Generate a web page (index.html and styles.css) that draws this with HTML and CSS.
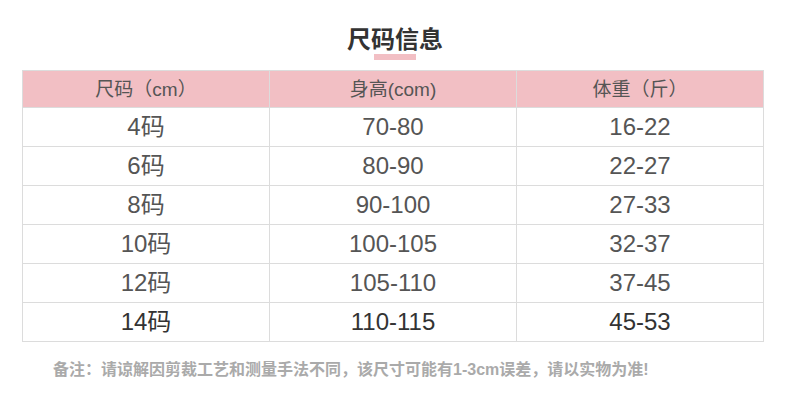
FILE: index.html
```html
<!DOCTYPE html>
<html lang="zh">
<head>
<meta charset="utf-8">
<link rel="stylesheet" href="styles.css">
</head>
<body>
<div class="page">
  <h1 class="title">尺码信息</h1>
  <div class="title-bar"></div>
  <table class="size-table">
    <thead>
      <tr><th>尺码（cm）</th><th>身高(com)</th><th>体重（斤）</th></tr>
    </thead>
    <tbody>
      <tr><td>4码</td><td>70-80</td><td>16-22</td></tr>
      <tr><td>6码</td><td>80-90</td><td>22-27</td></tr>
      <tr><td>8码</td><td>90-100</td><td>27-33</td></tr>
      <tr><td>10码</td><td>100-105</td><td>32-37</td></tr>
      <tr><td>12码</td><td>105-110</td><td>37-45</td></tr>
      <tr class="last"><td>14码</td><td>110-115</td><td>45-53</td></tr>
    </tbody>
  </table>
  <p class="note">备注：请谅解因剪裁工艺和测量手法不同，该尺寸可能有1-3cm误差，请以实物为准!</p>
</div>
</body>
</html>
```
FILE: styles.css
```css
html, body {
  margin: 0;
  padding: 0;
  background: #fff;
}
.page {
  width: 790px;
  height: 403px;
  display: flex;
  flex-direction: column;
  align-items: center;
  font-family: "Liberation Sans", "Noto Sans CJK SC", sans-serif;
  color: #555;
}
.title {
  margin: 23px 0 0 0;
  font-size: 24px;
  line-height: 30px;
  font-weight: bold;
  color: #333;
  font-family: "Noto Sans CJK SC", sans-serif;
}
.title-bar {
  width: 42px;
  height: 6px;
  margin-top: 1px;
  background: #f2bfc4;
}
.size-table {
  align-self: flex-start;
  margin: 10px 0 0 22px;
  width: 742px;
  border-collapse: collapse;
  table-layout: fixed;
}
.size-table th,
.size-table td {
  border: 1px solid #dcdcdc;
  padding: 0;
  text-align: center;
  font-weight: normal;
  line-height: 1;
}
.size-table th {
  background: #f2bfc4;
  height: 36px;
  font-size: 19px;
  color: #555;
}
.size-table td {
  height: 38px;
  font-size: 24px;
  color: #555;
}
.size-table tr.last td {
  color: #333;
}
.note {
  margin: 19px 0 0 0;
  align-self: flex-start;
  padding-left: 53px;
  font-size: 16px;
  line-height: 18px;
  font-weight: bold;
  color: #aaa;
}
```
